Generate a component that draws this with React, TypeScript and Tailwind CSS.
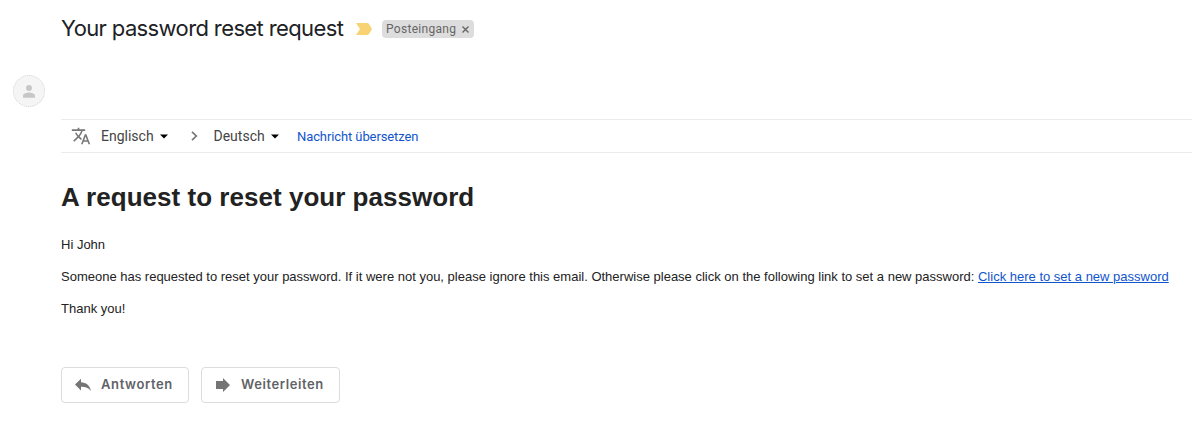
const Caret = () => (
  <svg className="h-[5px] w-2 shrink-0" viewBox="0 0 8 5"><path d="M0 0.5h8l-4 4z" fill="#000" /></svg>
);

export default function App() {
  return (
    <main className="flex h-[423px] w-full flex-col overflow-hidden bg-white font-['Liberation_Sans',Arial,sans-serif] text-[#222]">
      <header className="flex h-[58px] shrink-0 items-center pl-[61px]">
        <h1 className="w-[295px] shrink-0 whitespace-nowrap pb-0.5 font-['Inter',sans-serif] text-[22px] leading-7 tracking-[-0.620px] text-[#202124]">Your password reset request</h1>
        <svg className="h-3 w-4 shrink-0" viewBox="0 0 16 12"><path d="M0 0h11.5q.8 0 1.300.7L16 6l-3.200 5.300q-.5.7-1.300.7H0l4-6z" fill="#f8d373" /></svg>
        <div className="ml-2.5 flex h-[18px] w-[92px] items-center rounded bg-[#ddd] pl-1 font-['Roboto',sans-serif] text-xs text-[#666]">
          <span className="w-[76px] whitespace-nowrap tracking-[0.3px]">Posteingang</span>
          <svg className="h-[7px] w-[7px]" viewBox="0 0 7 7"><path d="M.5.5l6 6M6.500.5L.5 6.500" stroke="#666" strokeWidth="1.400" /></svg>
        </div>
      </header>
      <div className="flex h-[61px] shrink-0 pl-[13px] pt-[17px]">
        <div className="flex h-8 w-8 items-center justify-center rounded-full border border-dotted border-[#d5d5d5] bg-[#f5f5f5]">
          <svg className="h-[18px] w-[18px]" viewBox="0 0 24 24"><path d="M12 12a4 4 0 1 0 0-8 4 4 0 0 0 0 8zm0 2c-2.700 0-8 1.300-8 4v3h16v-3c0-2.700-5.300-4-8-4z" fill="#c7c7c7" /></svg>
        </div>
      </div>
      <section className="ml-[61px] flex h-[34px] shrink-0 items-center border-y border-[#ebebeb] pl-2.5 font-['Roboto',sans-serif] text-sm text-[#444]">
        <svg className="h-5 w-5 shrink-0" viewBox="0 0 24 24"><path d="M12.870 15.070l-2.540-2.510.03-.03A17.520 17.520 0 0 0 14.070 6H17V4h-7V2H8v2H1v1.990h11.170C11.500 7.920 10.440 9.750 9 11.350 8.070 10.320 7.300 9.190 6.690 8h-2c.73 1.630 1.730 3.170 2.980 4.560l-5.090 5.020L4 19l5-5 3.110 3.110.76-2.040zM18.500 10h-2L12 22h2l1.120-3h4.750L21 22h2l-4.500-12zm-2.620 7l1.620-4.330L19.120 17h-3.240z" fill="#777" /></svg>
        <span className="ml-2.5 w-[59px]">Englisch</span><Caret />
        <svg className="ml-[23px] h-2.5 w-[7px]" viewBox="0 0 7 10"><path d="M1 .8L5.300 5 1 9.200" fill="none" stroke="#777" strokeWidth="1.700" /></svg>
        <span className="ml-[15.500px] w-[57.500px]">Deutsch</span><Caret />
        <a className="ml-[18px] whitespace-nowrap pt-0.5 text-[13px] tracking-[-0.1px] text-[#15c]" href="#translate">Nachricht übersetzen</a>
      </section>
      <article className="flex flex-col gap-4 pl-[61px] pt-7 text-[13px] leading-4">
        <h2 className="mb-2 whitespace-nowrap text-[26px] font-bold leading-8 tracking-[0.03px]">A request to reset your password</h2>
        <p>Hi John</p>
        <p className="whitespace-nowrap">Someone has requested to reset your password. If it were not you, please ignore this email. Otherwise please click on the following link to set a new password: <a className="text-[#15c] underline" href="#reset">Click here to set a new password</a></p>
        <p>Thank you!</p>
      </article>
      <footer className="mt-[50px] flex gap-3 pl-[61px] font-['Inter',sans-serif] text-[13px] font-semibold text-[#5f6368]">
        <button className="flex h-9 w-32 items-center rounded border border-[#dadce0] pl-[13px]">
          <svg className="h-3.5 w-4 shrink-0" viewBox="0 0 16 14"><path d="M0 6.500L6 .8v3.400c5 .2 8.800 3 10 8.800-2.500-3.200-5.500-4.300-10-4.200v3.600z" fill="#757575" /></svg>
          <span className="ml-2.5 pb-px tracking-[0.620px]">Antworten</span>
        </button>
        <button className="flex h-9 w-[139px] items-center rounded border border-[#dadce0] pl-3.5">
          <svg className="h-3.5 w-3.5 shrink-0" viewBox="0 0 14 14"><path d="M0 3h7V0l7 7-7 7v-3H0z" fill="#757575" /></svg>
          <span className="ml-[11px] pb-px tracking-[0.580px]">Weiterleiten</span>
        </button>
      </footer>
    </main>
  );
}
